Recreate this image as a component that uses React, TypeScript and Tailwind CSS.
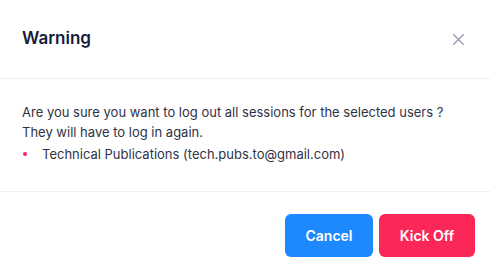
import { X } from "lucide-react"

const App = () => {
    return (
        <div className="w-[490px] h-[265px] bg-white font-['Inter',sans-serif] flex flex-col">
            <div className="h-[79px] flex items-center justify-between px-[22px] border-b border-[#efeff1]">
                <div className="text-[17px] font-semibold text-[#141b3d]">Warning</div>
                <X className="text-[#979db3]" size={19} strokeWidth={1.8} />
            </div>
            <div className="h-[113px] px-[22px] pt-[23px] border-b border-[#efeff1] text-[13px] leading-[20px] text-[#2f3345]">
                <p>Are you sure you want to log out all sessions for the selected users ?</p>
                <p>They will have to log in again.</p>
                <ul className="mt-[2px]">
                    <li className="flex items-center">
                        <span className="w-[4px] h-[4px] rounded-full bg-[#fc2759] ml-[1px] mr-[15px]"></span>
                        Technical Publications (tech.pubs.to@gmail.com)
                    </li>
                </ul>
            </div>
            <div className="flex justify-end gap-[6px] px-[15px] pt-[22px]">
                <button className="w-[88px] h-[43px] rounded-[6px] bg-[#1e88ff] text-white text-[14px] font-semibold">Cancel</button>
                <button className="w-[96px] h-[43px] rounded-[6px] bg-[#fc2759] text-white text-[14px] font-semibold">Kick Off</button>
            </div>
        </div>
    )
}

export default App
